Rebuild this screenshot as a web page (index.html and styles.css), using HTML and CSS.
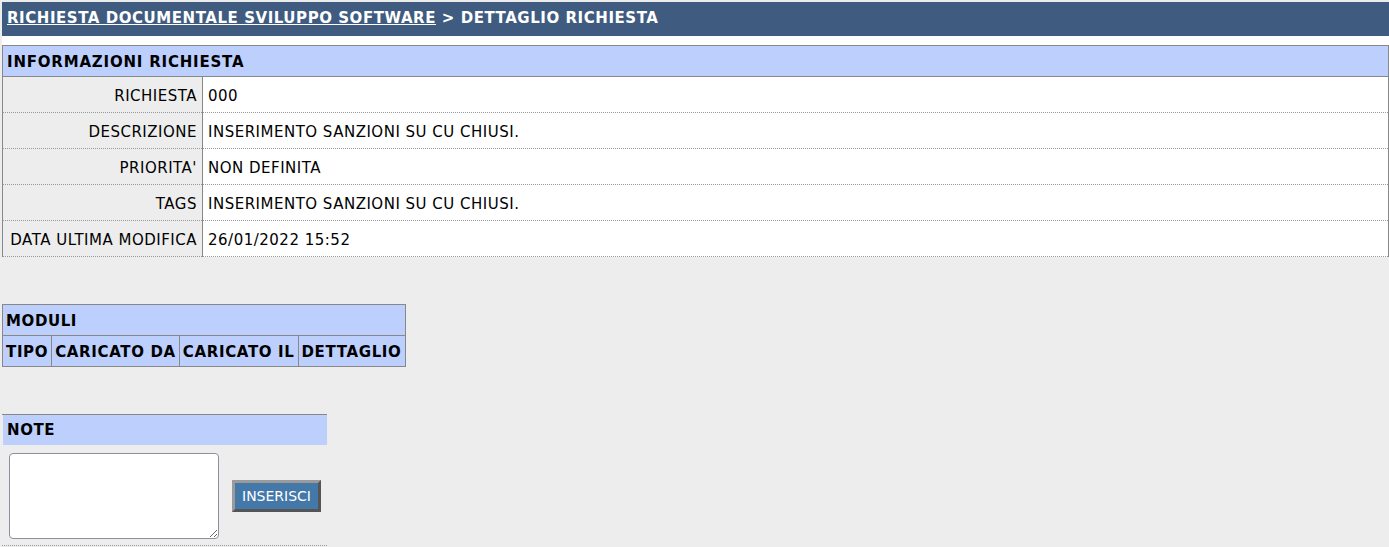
FILE: index.html
```html
<!DOCTYPE html>
<html>
<head>
<meta charset="utf-8">
<link rel="stylesheet" href="styles.css">
</head>
<body>
<div class="titlebar"><a href="#" class="crumb">RICHIESTA DOCUMENTALE SVILUPPO SOFTWARE</a> &gt; DETTAGLIO RICHIESTA</div>
<div class="info-wrap">
<table class="info">
<tr><th colspan="2" class="sect">INFORMAZIONI RICHIESTA</th></tr>
<tr><td class="lbl">RICHIESTA</td><td class="val">000</td></tr>
<tr><td class="lbl">DESCRIZIONE</td><td class="val">INSERIMENTO SANZIONI SU CU CHIUSI.</td></tr>
<tr><td class="lbl">PRIORITA'</td><td class="val">NON DEFINITA</td></tr>
<tr><td class="lbl">TAGS</td><td class="val">INSERIMENTO SANZIONI SU CU CHIUSI.</td></tr>
<tr><td class="lbl">DATA ULTIMA MODIFICA</td><td class="val">26/01/2022 15:52</td></tr>
</table>
</div>
<table class="moduli">
<tr><th colspan="4" class="sect">MODULI</th></tr>
<tr><th>TIPO</th><th>CARICATO DA</th><th>CARICATO IL</th><th>DETTAGLIO</th></tr>
</table>
<div class="note">
<div class="note-head">NOTE</div>
<div class="note-body">
<textarea class="note-text"></textarea>
<button class="btn">INSERISCI</button>
</div>
</div>
</body>
</html>
```
FILE: styles.css
```css
html, body {
  margin: 0;
  padding: 0;
}
body {
  background: #ededed;
  padding: 2px 0 0 2px;
  font-family: "DejaVu Sans", sans-serif;
  font-size: 15px;
  letter-spacing: 0.5px;
  color: #000;
}
.titlebar {
  background: #3f5c80;
  color: #fff;
  font-weight: bold;
  font-size: 15px;
  letter-spacing: 0.55px;
  height: 34px;
  line-height: 33px;
  padding-left: 5px;
  white-space: nowrap;
}
.crumb {
  color: #fff;
  text-decoration: underline;
}
.info-wrap {
  background: #fff;
  padding-top: 9px;
}
.info {
  width: 100%;
  border-collapse: collapse;
  border: 1px solid #888;
  border-bottom: none;
  background: #ededed;
}
.sect {
  background: #bccffd;
  text-align: left;
  font-weight: bold;
  font-size: 15px;
  letter-spacing: 0.8px;
  height: 28px;
  padding: 2px 4px 0;
}
.info .sect {
  border-bottom: 1px solid #888;
}
.info td {
  height: 33px;
  padding: 2px 5px 0;
  border-bottom: 1px dotted #999;
}
.lbl {
  width: 189px;
  text-align: right;
  background: #ededed;
  border-right: 1px solid #888;
  white-space: nowrap;
}
.val {
  background: #fff;
}
.moduli {
  margin-top: 47px;
  border-collapse: collapse;
  border: 1px solid #888;
  background: #bccffd;
}
.moduli th {
  border: 1px solid #888;
  height: 29px;
  padding: 1px 3px 0;
  text-align: left;
  font-size: 15px;
  letter-spacing: 0.65px;
  white-space: nowrap;
}
.moduli .sect {
  letter-spacing: 0.6px;
}
.note {
  margin-top: 47px;
  width: 325px;
  border-top: 1px solid #888;
  border-bottom: 1px dotted #999;
}
.note-head {
  background: #bccffd;
  font-weight: bold;
  font-size: 15px;
  letter-spacing: 0.6px;
  height: 30px;
  line-height: 31px;
  padding-left: 4px;
  margin-left: 1px;
}
.note-body {
  display: flex;
  align-items: center;
  padding: 8px 0 6px 7px;
}
.note-text {
  width: 204px;
  height: 80px;
  border: 1px solid #8f8f9d;
  border-radius: 4px;
  background: #fff;
  margin: 0;
  padding: 2px;
  resize: both;
}
.btn {
  margin-left: 13px;
  background: #4478a8;
  color: #fff;
  font-family: "DejaVu Sans", sans-serif;
  font-size: 14px;
  border-style: solid;
  border-width: 3px;
  border-color: #9a9a9a #555 #555 #9a9a9a;
  height: 32px;
  width: 89px;
  padding: 0;
}
```
